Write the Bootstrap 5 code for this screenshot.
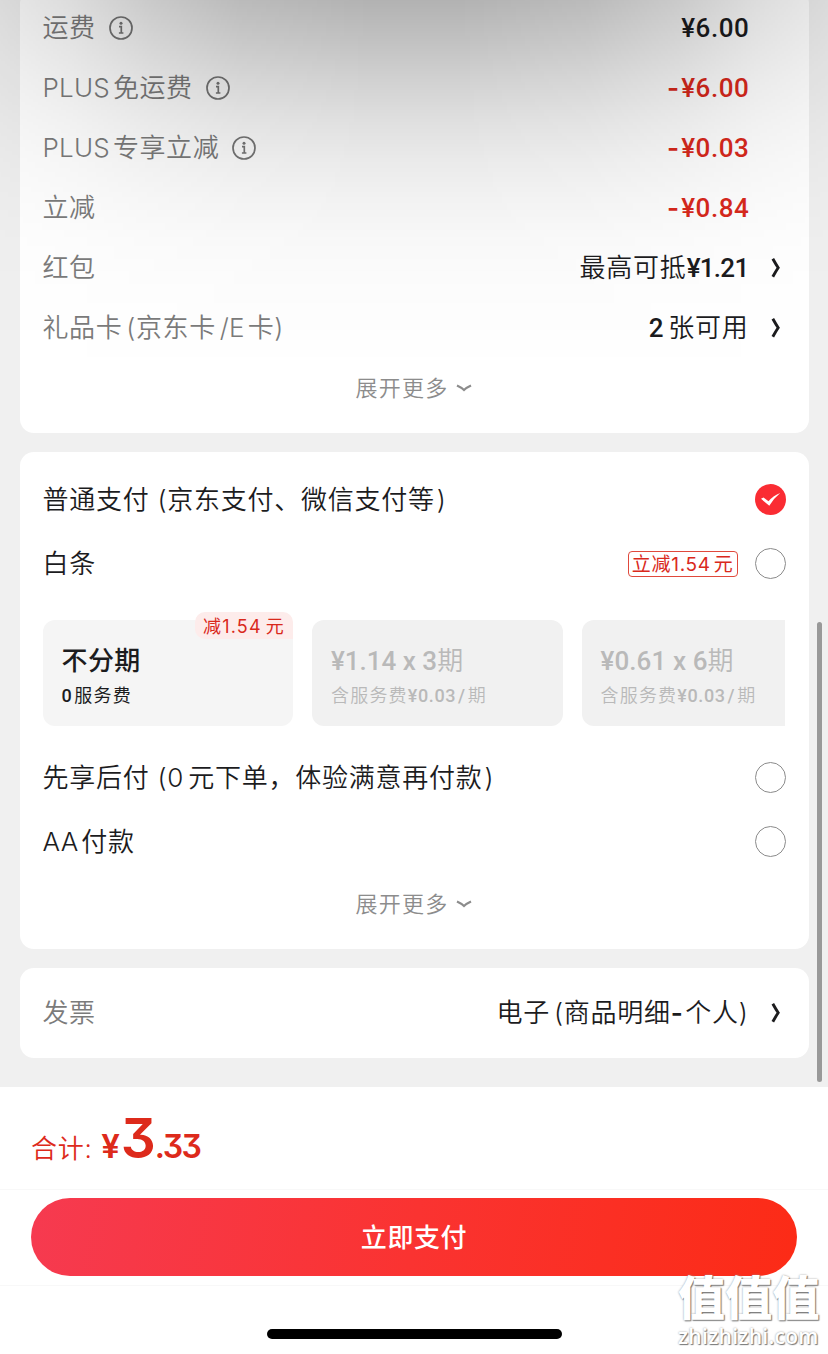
<!DOCTYPE html>
<html lang="zh-CN">
<head>
    <meta charset="UTF-8">
    <meta name="viewport" content="width=device-width, initial-scale=1.0">
    <title>确认订单</title>
    <link href="https://cdn.jsdelivr.net/npm/bootstrap@5.3.0/dist/css/bootstrap.min.css" rel="stylesheet">
    <style>
        body {
            width: 828px;
            height: 1354px;
            overflow: hidden;
            background: #fff;
            color: #1c1c1e;
            font-family: Inter, "Noto Sans CJK SC", sans-serif;
            font-size: 26px;
            font-weight: 350;
            line-height: 40px;
            letter-spacing: 0.75px;
            white-space: nowrap;
        }

        .order-page {
            height: 1087px;
            padding: 0 19.5px;
            background: #f0f0f0;
            overflow: hidden;
        }

        .panel {
            background: #fff;
            border-radius: 14px;
            padding: 0 23px;
        }

        .panel-fees { height: 443px; margin-top: -10px; padding-top: 8px; }
        .panel-pay { height: 497px; margin-top: 19px; padding-top: 16px; }
        .panel-invoice { height: 90px; margin-top: 19px; }

        .fee-line { height: 60px; padding-right: 36px; }
        .fee-line.has-arrow { padding-right: 4px; }
        .pay-line { height: 64px; }

        .text-label { color: #7b7b7b; letter-spacing: 0.6px; }

        /* Prices use a narrower, heavier digit face */
        .num {
            font-family: Roboto, "Noto Sans CJK SC", sans-serif;
            font-weight: 500;
            letter-spacing: 0.6px;
        }

        .num-tight { letter-spacing: -0.7px; }
        .minus { font-family: Inter, sans-serif; font-weight: 600; margin-right: 1.5px; }
        .latin { letter-spacing: 0.2px; margin-right: 3px; }

        .text-price { color: #d9291c; }

        .icon-info { margin-left: 13px; }
        .icon-arrow { margin-left: 21px; }

        .expand {
            height: 60px;
            font-size: 22px;
            letter-spacing: 1.2px;
            color: #8c8c8c;
        }

        .paren-open { margin-left: 8px; }
        .paren-near { margin-left: 4px; }
        .paren-close { margin-left: 2px; }

        .ring {
            width: 31px;
            height: 31px;
            margin-bottom: 2px;
            border: 1.5px solid #8b8b8b;
            border-radius: 50%;
        }

        .ring-on { margin-bottom: 2px; }

        .discount {
            height: 26px;
            padding: 0 3px;
            margin-right: 17px;
            border: 1px solid #e0493c;
            border-radius: 4px;
            color: #d9291c;
            font-size: 19px;
            line-height: 25px;
            font-weight: 400;
            letter-spacing: 0.7px;
        }

        .discount .yuan { margin-left: 3px; }

        .plans {
            height: 106px;
            margin: 24px 0 20px;
            gap: 19px;
        }

        .plan {
            flex: 0 0 250.5px;
            padding: 20px 19px 0;
            border-radius: 12px;
            background: #f1f1f1;
            color: #b9b9b9;
        }

        .plan-clip { overflow: hidden; width: 203.5px; flex: 0 0 203.5px; border-radius: 12px 0 0 12px; }
        .plan.active { background: #f5f5f5; color: #1c1c1e; }
        .plan-title { font-size: 26px; line-height: 42px; letter-spacing: 0.4px; }
        .plan-title .num { letter-spacing: 0.1px; }
        .plan-title .num-tight { letter-spacing: 0; }
        .plan-note { font-size: 18px; line-height: 28px; letter-spacing: 1.2px; }
        .plan-note .slash { margin: 0 2px; }
        .plan-note .zero { margin-right: 2px; }
        .plan.active .plan-title { font-weight: 500; }
        .plan.active .plan-note { font-weight: 400; }

        .plan-tag {
            top: -8px;
            right: 0;
            height: 27px;
            padding: 0 8px;
            border-radius: 10px 10px 0 10px;
            background: #fdeceb;
            color: #d9291c;
            font-size: 18px;
            line-height: 29px;
            font-weight: 400;
            letter-spacing: 1.2px;
        }

        .total {
            height: 103px;
            padding: 19px 31px 0;
            border-bottom: 1px solid #f8f8f8;
            color: #dd2a1b;
        }

        /* cv09 gives Inter its flat-topped three */
        .total-num {
            font-weight: 600;
            font-feature-settings: "cv09";
            letter-spacing: -1px;
        }

        .total-sign { font-size: 34px; margin-left: 9px; letter-spacing: 0; font-family: Roboto, sans-serif; }
        .total-int { font-size: 55px; line-height: 64px; margin-left: 1px; }
        .total-dec { font-size: 32px; letter-spacing: -1.6px; }

        .pay-wrap { height: 96px; padding: 8px 31px 0; border-bottom: 1px solid #f8f8f8; }

        .btn-pay, .btn-pay:hover {
            height: 78px;
            border: 0;
            background: linear-gradient(100deg, #f63a50, #fa3331 50%, #fc2b16);
            color: #fff;
            font-size: 26px;
            font-weight: 500;
            letter-spacing: 0.6px;
        }

        .home-bar { width: 295px; height: 10px; margin-top: 43px; background: #000; }

        /* Soft shade falling from the top edge, fading towards both sides */
        .top-shade {
            left: 0;
            top: 0;
            width: 828px;
            height: 370px;
            background: linear-gradient(rgba(0, 0, 0, 0.3), rgba(0, 0, 0, 0.245) 40px, rgba(0, 0, 0, 0.19) 75px, rgba(0, 0, 0, 0.125) 120px, rgba(0, 0, 0, 0.083) 160px, rgba(0, 0, 0, 0.05) 200px, rgba(0, 0, 0, 0.027) 240px, rgba(0, 0, 0, 0.011) 290px, transparent);
            -webkit-mask-image: linear-gradient(to right, rgba(0, 0, 0, 0.3), rgba(0, 0, 0, 0.45) 71px, rgba(0, 0, 0, 0.69) 150px, rgba(0, 0, 0, 0.89) 240px, #000 370px, #000 458px, rgba(0, 0, 0, 0.89) 588px, rgba(0, 0, 0, 0.69) 678px, rgba(0, 0, 0, 0.45) 757px, rgba(0, 0, 0, 0.3));
            mask-image: linear-gradient(to right, rgba(0, 0, 0, 0.3), rgba(0, 0, 0, 0.45) 71px, rgba(0, 0, 0, 0.69) 150px, rgba(0, 0, 0, 0.89) 240px, #000 370px, #000 458px, rgba(0, 0, 0, 0.89) 588px, rgba(0, 0, 0, 0.69) 678px, rgba(0, 0, 0, 0.45) 757px, rgba(0, 0, 0, 0.3));
            pointer-events: none;
        }

        .scroll-thumb { left: 817px; top: 622px; width: 5px; height: 460px; background: #999; }

        .watermark {
            left: 678px;
            top: 1271px;
            color: #fff;
            text-shadow: 1px 1px 1px #777, 0 0 2px #999;
        }

        .watermark-zh { font-size: 47px; line-height: 54px; font-weight: 900; letter-spacing: 0.2px; }
        .watermark-en { font-family: "Open Sans", sans-serif; font-size: 21px; line-height: 22px; font-weight: 600; letter-spacing: 0.3px; }
    </style>
</head>
<body class="position-relative">
    <svg class="d-none">
        <symbol id="info" viewBox="0 0 24 24">
            <circle cx="12" cy="12" r="11" fill="none" stroke="#777" stroke-width="1.7"/>
            <circle cx="12" cy="7.2" r="1.5" fill="#777"/>
            <path d="M10 10.7h2.3v6.2M9.9 17h4.5" fill="none" stroke="#777" stroke-width="1.7"/>
        </symbol>
        <symbol id="arrow" viewBox="0 0 12 22">
            <path d="M2.8 1.8Q6 7.5 8.2 10.8Q6 14 2.8 19.8" fill="none" stroke="#1c1c1e" stroke-width="2.9"/>
        </symbol>
        <symbol id="down" viewBox="0 0 16 8">
            <path d="M1 1.6Q6 4 8 6Q10 4 15 1.6" fill="none" stroke="#8c8c8c" stroke-width="2.2"/>
        </symbol>
    </svg>

    <main class="order-page">
        <section class="panel panel-fees">
            <div class="fee-line d-flex align-items-center">
                <span class="text-label">运费</span>
                <svg class="icon-info" width="24" height="24"><use href="#info"/></svg>
                <span class="num ms-auto">¥6.00</span>
            </div>
            <div class="fee-line d-flex align-items-center">
                <span class="text-label"><span class="latin">PLUS</span>免运费</span>
                <svg class="icon-info" width="24" height="24"><use href="#info"/></svg>
                <span class="num text-price ms-auto"><span class="minus">-</span>¥6.00</span>
            </div>
            <div class="fee-line d-flex align-items-center">
                <span class="text-label"><span class="latin">PLUS</span>专享立减</span>
                <svg class="icon-info" width="24" height="24"><use href="#info"/></svg>
                <span class="num text-price ms-auto"><span class="minus">-</span>¥0.03</span>
            </div>
            <div class="fee-line d-flex align-items-center">
                <span class="text-label">立减</span>
                <span class="num text-price ms-auto"><span class="minus">-</span>¥0.84</span>
            </div>
            <div class="fee-line has-arrow d-flex align-items-center">
                <span class="text-label">红包</span>
                <span class="ms-auto">最高可抵<span class="num num-tight">¥1.21</span></span>
                <svg class="icon-arrow" width="12" height="22"><use href="#arrow"/></svg>
            </div>
            <div class="fee-line has-arrow d-flex align-items-center">
                <span class="text-label">礼品卡<span class="paren-near">(</span>京东卡<span class="latin ms-1">/E</span>卡)</span>
                <span class="ms-auto"><span class="num me-1">2</span>张可用</span>
                <svg class="icon-arrow" width="12" height="22"><use href="#arrow"/></svg>
            </div>
            <div class="expand d-flex align-items-center justify-content-center">
                展开更多<svg class="ms-2" width="16" height="8"><use href="#down"/></svg>
            </div>
        </section>

        <section class="panel panel-pay">
            <div class="pay-line d-flex align-items-center justify-content-between">
                <span>普通支付<span class="paren-open">(</span>京东支付、微信支付等<span class="paren-close">)</span></span>
                <svg class="ring-on" width="31" height="31" viewBox="0 0 31 31">
                    <circle cx="15.5" cy="15.5" r="15.5" fill="#fa2c33"/>
                    <path d="M6 14.8L8.5 13.5L13.5 17.2Q18.5 11.5 25.2 9Q18.5 14.5 14.3 21.8Z" fill="#fff"/>
                </svg>
            </div>
            <div class="pay-line d-flex align-items-center">
                <span>白条</span>
                <span class="discount ms-auto">立减1.54<span class="yuan">元</span></span>
                <span class="ring"></span>
            </div>
            <div class="plans d-flex">
                <div class="plan active position-relative">
                    <span class="plan-tag position-absolute">减1.54<span class="ms-1">元</span></span>
                    <div class="plan-title">不分期</div>
                    <div class="plan-note"><span class="num zero">0</span>服务费</div>
                </div>
                <div class="plan">
                    <div class="plan-title"><span class="num num-tight">¥1.14 x 3</span>期</div>
                    <div class="plan-note">含服务费<span class="num">¥0.03<span class="slash">/</span></span>期</div>
                </div>
                <div class="plan plan-clip">
                    <div class="plan-title"><span class="num">¥0.61 x 6</span>期</div>
                    <div class="plan-note">含服务费<span class="num">¥0.03<span class="slash">/</span></span>期</div>
                </div>
            </div>
            <div class="pay-line d-flex align-items-center justify-content-between">
                <span>先享后付<span class="paren-open">(</span>0<span class="ms-1">元下单，体验满意再付款<span class="paren-close">)</span></span></span>
                <span class="ring"></span>
            </div>
            <div class="pay-line d-flex align-items-center justify-content-between">
                <span><span class="latin">AA</span>付款</span>
                <span class="ring"></span>
            </div>
            <div class="expand d-flex align-items-center justify-content-center">
                展开更多<svg class="ms-2" width="16" height="8"><use href="#down"/></svg>
            </div>
        </section>

        <section class="panel panel-invoice d-flex align-items-center">
            <span class="text-label">发票</span>
            <span class="ms-auto">电子<span class="paren-near">(</span>商品明细<span class="minus">-</span>个人)</span>
            <svg class="icon-arrow" width="16" height="22" viewBox="0 0 16 22"><use href="#arrow" width="12" height="22"/></svg>
        </section>
    </main>

    <footer>
        <div class="total d-flex align-items-baseline">
            <span>合计:</span>
            <span class="total-num total-sign">¥</span><span class="total-num total-int">3</span><span class="total-num total-dec">.33</span>
        </div>
        <div class="pay-wrap">
            <button type="button" class="btn btn-pay rounded-pill w-100">立即支付</button>
        </div>
        <div class="home-bar rounded-pill mx-auto"></div>
    </footer>

    <div class="top-shade position-absolute"></div>
    <div class="scroll-thumb position-absolute rounded-pill"></div>
    <div class="watermark position-absolute">
        <div class="watermark-zh">值值值</div>
        <div class="watermark-en">zhizhizhi.com</div>
    </div>
    <script src="https://cdn.jsdelivr.net/npm/bootstrap@5.3.0/dist/js/bootstrap.bundle.min.js"></script>
</body>
</html>
